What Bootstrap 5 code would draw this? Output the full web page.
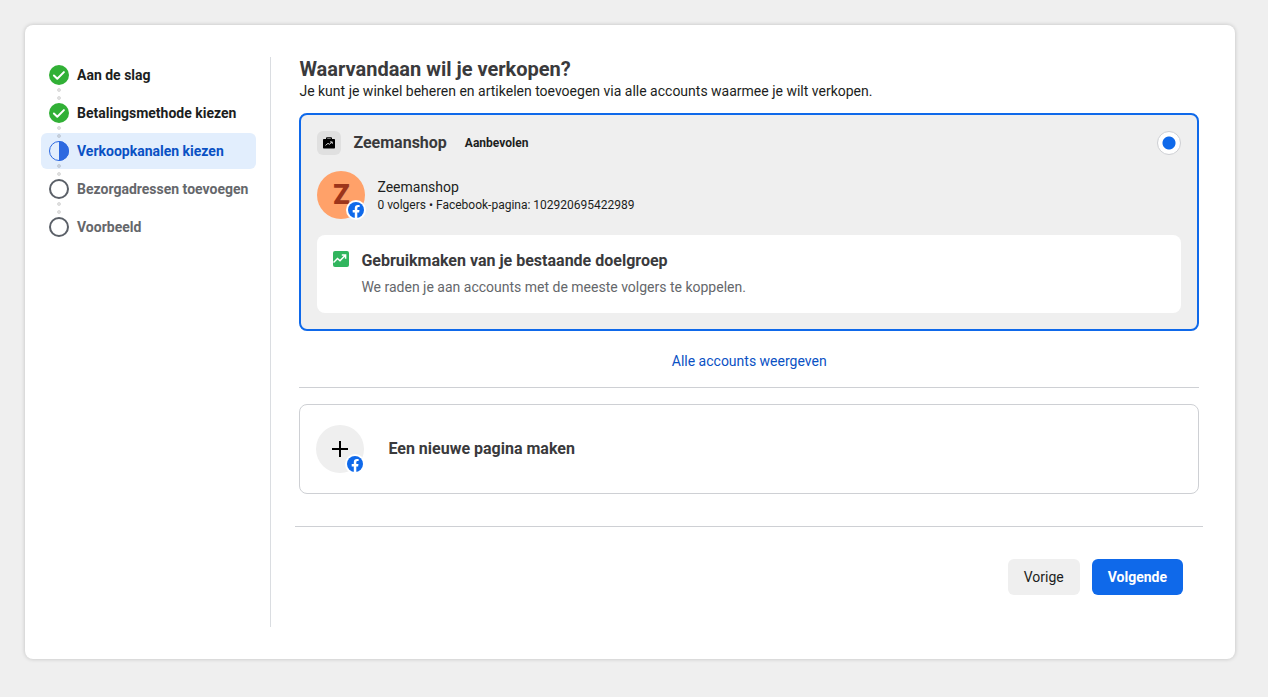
<!DOCTYPE html>
<html lang="nl">
<head>
<meta charset="utf-8">
<meta name="viewport" content="width=device-width, initial-scale=1">
<title>Verkoopkanalen kiezen</title>
<link href="https://cdn.jsdelivr.net/npm/bootstrap@5.3.0/dist/css/bootstrap.min.css" rel="stylesheet">
<style>
  body { font-family: Roboto, "Liberation Sans", sans-serif; font-size: 14px; line-height: 20px; color: #1c1e21; background: #efefef; }
  svg { display: block; flex: none; }
  .wizard { margin: 25px 33px 25px 25px; padding: 32px 32px 32px 16px; border-radius: 8px; background: #fff; box-shadow: 0 0 4px rgba(0, 0, 0, .2); }
  .wizard-side { flex: 0 0 230px; padding-right: 14px; border-right: 1px solid #dadde1; }
  .step-link { position: relative; height: 36px; margin-bottom: 2px; padding: 0 8px; border-radius: 6px; font-weight: 700; white-space: nowrap; color: #1c1e21; text-decoration: none; }
  .step-link.current { background: #e2eefd; color: #0a51c4; }
  .step-link.todo { color: #65676b; }
  .step-link:not(.last)::after { content: ""; position: absolute; z-index: 1; left: 16px; top: 31px; width: 4px; height: 12px; background: radial-gradient(circle at 2px 2px, rgba(0, 0, 0, .13) 1.6px, transparent 2.2px) 0 0 / 4px 8px; }
  .wizard-main { min-width: 0; padding-left: 24px; }
  .page-title { font-size: 20px; line-height: 24px; font-weight: 700; color: #3a3a3c; }
  .title-16 { font-size: 16px; line-height: 20px; font-weight: 700; color: #3a3a3c; }
  .text-12 { font-size: 12px; line-height: 16px; }
  .account { margin-top: 12px; padding: 16px; border: 2px solid #0f69ea; border-radius: 8px; background: #efefef; }
  .account-head { gap: 18px; }
  .shop-icon { width: 24px; height: 24px; border-radius: 6px; background: #e0e0e0; }
  .choice { margin: 0; padding: 0; width: 24px; height: 24px; border: 1px solid #ced0d4; border-radius: 50%; appearance: none; background: #fff; }
  .choice:checked { background: radial-gradient(circle, #0f69ea 6px, #fff 7px); }
  .avatar { position: relative; width: 48px; height: 48px; flex: none; border-radius: 50%; background: #efefef; }
  .avatar.orange { background: #ffa169; color: #9c351b; font-size: 27px; font-weight: 900; }
  .fb-mark { position: absolute; right: -1px; bottom: -1px; }
  .tip { padding: 16px; border-radius: 8px; background: #fff; }
  .tip-body { display: grid; gap: 6px; }
  .muted-text { color: #65676b; }
  .all-link { color: #0a51c4; text-decoration: none; }
  .line { margin: 16px 0; border: 0; border-top: 1px solid #ced0d4; opacity: 1; }
  .line-wide { margin: 32px 0; }
  .new-page { padding: 20px 16px; border: 1px solid #ced0d4; border-radius: 8px; background: #fff; }
  .wizard-actions { gap: 12px; padding: 0 20px 32px 0; }
  .btn-wiz { height: 36px; padding: 0 16px; border: 0; border-radius: 6px; font-size: 14px; }
  .btn-prev { background: #efefef; color: #1c1e21; }
  .btn-next { background: #0f69ea; color: #fff; font-weight: 700; }
</style>
</head>
<body>
<svg width="0" height="0" class="position-absolute" aria-hidden="true">
  <symbol id="check" viewBox="0 0 20 20"><circle cx="10" cy="10" r="10" fill="#31b036"/><path d="M4.900 10.500l3.400 3.300 6.600-6.700" fill="none" stroke="#fff" stroke-width="2" stroke-linecap="round" stroke-linejoin="round"/></symbol>
  <symbol id="half" viewBox="0 0 20 20"><circle cx="10" cy="10" r="9.500" fill="none" stroke="#2d69e0"/><path d="M10 0a10 10 0 0 1 0 20z" fill="#2d69e0"/></symbol>
  <symbol id="ring" viewBox="0 0 20 20"><circle cx="10" cy="10" r="9" fill="#fff" stroke="#5b6068" stroke-width="2"/></symbol>
  <symbol id="fb" viewBox="0 0 20 20"><circle cx="10" cy="10" r="10" fill="#fff"/><circle cx="10" cy="10" r="8" fill="#0f69ea"/><path d="M8.800 18v-5.600H6.700V10h2.100V8.200c0-2.200 1.200-3.300 3.100-3.300.6 0 1.200.1 1.700.2v1.900h-1c-1 0-1.300.6-1.300 1.300V10h2.200l-.4 2.400h-1.800V18z" fill="#fff"/></symbol>
</svg>
<div class="wizard d-flex">
  <nav class="wizard-side" aria-label="Stappen">
    <a href="#" class="step-link d-flex align-items-center gap-2"><svg width="20" height="20"><use href="#check"/></svg>Aan de slag</a>
    <a href="#" class="step-link d-flex align-items-center gap-2"><svg width="20" height="20"><use href="#check"/></svg>Betalingsmethode kiezen</a>
    <a href="#" class="step-link current d-flex align-items-center gap-2" aria-current="step"><svg width="20" height="20"><use href="#half"/></svg>Verkoopkanalen kiezen</a>
    <a href="#" class="step-link todo d-flex align-items-center gap-2"><svg width="20" height="20"><use href="#ring"/></svg>Bezorgadressen toevoegen</a>
    <a href="#" class="step-link todo last d-flex align-items-center gap-2"><svg width="20" height="20"><use href="#ring"/></svg>Voorbeeld</a>
  </nav>
  <main class="wizard-main flex-grow-1">
    <div class="px-1">
      <h1 class="page-title mb-0">Waarvandaan wil je verkopen?</h1>
      <p class="mb-0">Je kunt je winkel beheren en artikelen toevoegen via alle accounts waarmee je wilt verkopen.</p>
      <section class="account">
        <div class="account-head d-flex align-items-center">
          <div class="d-flex align-items-center">
            <span class="shop-icon d-flex align-items-center justify-content-center">
              <svg width="12" height="12" viewBox="0 0 12 12"><path fill-rule="evenodd" d="M3 2V1.500C3 .7 3.400.3 4.200.3h3.600C8.600.3 9 .7 9 1.500V2h2c.6 0 1 .4 1 1v7.500c0 .6-.4 1-1 1H1c-.6 0-1-.4-1-1V3c0-.6.400-1 1-1zm1.200 0h3.600v-.6H4.200z"/><path d="M2.500 8.400L5 6.300l1.400 1L9 5M7 4.900h2.300v2" fill="none" stroke="#e0e0e0" stroke-width=".9"/></svg>
            </span>
            <label for="account-choice" class="title-16 ms-2 ps-1">Zeemanshop</label>
          </div>
          <span class="text-12 fw-bold">Aanbevolen</span>
          <input type="radio" class="choice ms-auto" id="account-choice" name="account" checked>
        </div>
        <div class="d-flex align-items-center mt-3 mb-3">
          <div class="avatar orange d-flex align-items-center justify-content-center">
            <span>Z</span>
            <svg class="fb-mark" width="20" height="20"><use href="#fb"/></svg>
          </div>
          <div class="ms-2 ps-1">
            <div>Zeemanshop</div>
            <div class="text-12">0 volgers • Facebook-pagina: 102920695422989</div>
          </div>
        </div>
        <div class="tip d-flex">
          <svg width="16" height="16" viewBox="0 0 16 16"><rect width="16" height="16" rx="2" fill="#31b55e"/><path d="M.5 11.500L4.500 7.500l2.500 2.200L12.300 4.300M8.800 4h3.800v3.800" fill="none" stroke="#fff" stroke-width="1.500"/></svg>
          <div class="tip-body ms-2 ps-1">
            <h2 class="title-16 mb-0">Gebruikmaken van je bestaande doelgroep</h2>
            <p class="muted-text mb-0">We raden je aan accounts met de meeste volgers te koppelen.</p>
          </div>
        </div>
      </section>
      <div class="text-center mt-3 pt-1"><a href="#" class="all-link">Alle accounts weergeven</a></div>
      <hr class="line">
      <button type="button" class="new-page w-100 d-flex align-items-center text-start">
        <span class="avatar">
          <svg width="48" height="48" viewBox="0 0 48 48"><path d="M24 16v16M16 24h16" stroke="#000" stroke-width="2"/></svg>
          <svg class="fb-mark" width="20" height="20"><use href="#fb"/></svg>
        </span>
        <span class="title-16 ms-4">Een nieuwe pagina maken</span>
      </button>
    </div>
    <hr class="line line-wide">
    <div class="wizard-actions d-flex justify-content-end">
      <button type="button" class="btn btn-wiz btn-prev">Vorige</button>
      <button type="button" class="btn btn-wiz btn-next">Volgende</button>
    </div>
  </main>
</div>
<script src="https://cdn.jsdelivr.net/npm/bootstrap@5.3.0/dist/js/bootstrap.bundle.min.js"></script>
</body>
</html>
